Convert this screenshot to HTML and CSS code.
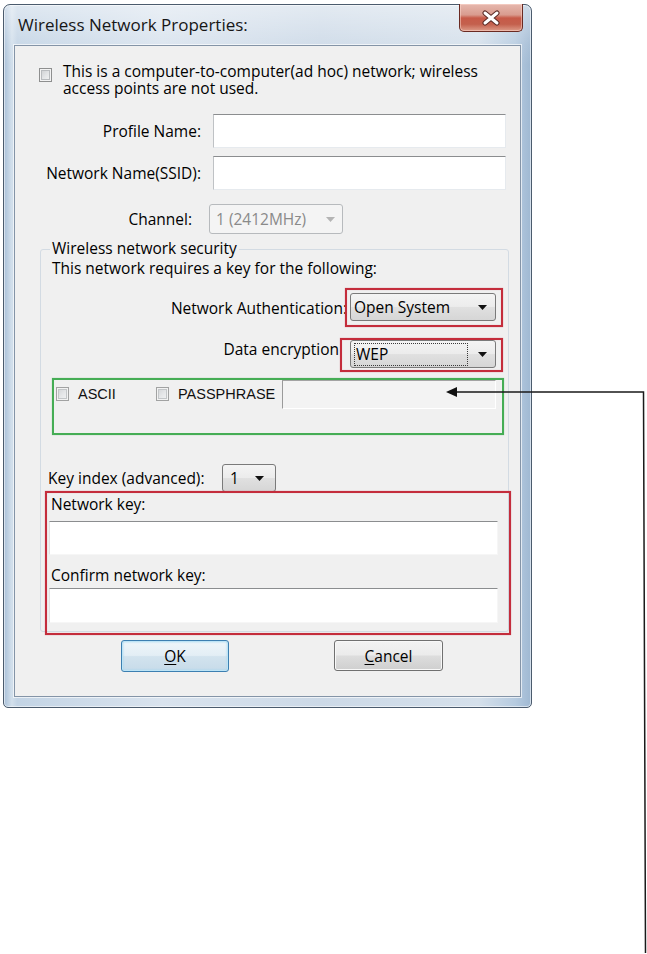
FILE: index.html
```html
<!DOCTYPE html>
<html lang="en">
<head>
<meta charset="utf-8">
<title>Wireless Network Properties</title>
<link rel="stylesheet" href="styles.css">
</head>
<body>
<div class="window">
  <div class="titlebar">
    <span class="title">Wireless Network Properties:</span>
    <span class="close" role="button" aria-label="Close">
      <svg class="close-x" width="20" height="16" viewBox="0 0 20 16">
        <path d="M4 3 L16 13 M16 3 L4 13" stroke="#5a2a24" stroke-width="5" stroke-linecap="round" fill="none"/>
        <path d="M4 3 L16 13 M16 3 L4 13" stroke="#ffffff" stroke-width="3" stroke-linecap="round" fill="none"/>
      </svg>
    </span>
  </div>
  <div class="panel">
    <div class="adhoc">
      <span class="cb"></span>
      <span class="adhoc-text">This is a computer-to-computer(ad hoc) network; wireless<br>access points are not used.</span>
    </div>
    <div class="row row-profile">
      <span class="lbl lbl-wide">Profile Name:</span>
      <span class="edit edit-wide"></span>
    </div>
    <div class="row row-ssid">
      <span class="lbl lbl-wide">Network Name(SSID):</span>
      <span class="edit edit-wide"></span>
    </div>
    <div class="row row-channel">
      <span class="lbl lbl-channel">Channel:</span>
      <span class="combo combo-disabled combo-channel">
        <span class="combo-text">1 (2412MHz)</span>
        <svg class="arrow" width="9" height="5" viewBox="0 0 9 5"><path d="M0 0 H9 L4.5 5 Z" fill="#b4b4b4"/></svg>
      </span>
    </div>
    <div class="group">
      <span class="legend">Wireless network security</span>
      <div class="group-intro">This network requires a key for the following:</div>
      <div class="pick pick-auth">
        <span class="pick-lbl pick-lbl-auth">Network Authentication:</span>
        <span class="hl hl-auth">
          <span class="combo combo-wide">
            <span class="combo-text">Open System</span>
            <svg class="arrow" width="9" height="5" viewBox="0 0 9 5"><path d="M0 0 H9 L4.5 5 Z" fill="#111"/></svg>
          </span>
        </span>
      </div>
      <div class="pick pick-enc">
        <span class="pick-lbl pick-lbl-enc">Data encryption</span>
        <span class="hl hl-enc">
          <span class="combo combo-wide combo-focus">
            <span class="focus">WEP</span>
            <svg class="arrow" width="9" height="5" viewBox="0 0 9 5"><path d="M0 0 H9 L4.5 5 Z" fill="#111"/></svg>
          </span>
        </span>
      </div>
      <div class="green">
        <span class="opt opt-ascii"><span class="cb cb-small"></span><span class="opt-text">ASCII</span></span>
        <span class="opt opt-pass"><span class="cb cb-small"></span><span class="opt-text">PASSPHRASE</span></span>
        <span class="keyfield"></span>
      </div>
      <div class="row row-keyindex">
        <span class="lbl lbl-keyindex">Key index (advanced):</span>
        <span class="combo combo-key">
          <span class="combo-text">1</span>
          <svg class="arrow" width="9" height="5" viewBox="0 0 9 5"><path d="M0 0 H9 L4.5 5 Z" fill="#111"/></svg>
        </span>
      </div>
      <div class="hl keys">
        <div class="nk-lbl">Network key:</div>
        <span class="edit nk-edit"></span>
        <div class="nk-lbl nk-lbl2">Confirm network key:</div>
        <span class="edit nk-edit nk-edit2"></span>
      </div>
    </div>
    <div class="buttons">
      <span class="btn btn-default"><u>O</u>K</span>
      <span class="btn btn-cancel"><u>C</u>ancel</span>
    </div>
  </div>
</div>
<svg class="callout" width="647" height="954" viewBox="0 0 647 954">
  <path d="M455 392 H643.5 L645.5 953" stroke="#1a1a1a" stroke-width="1.5" fill="none"/>
  <path d="M446 392 L457 387 L457 397 Z" fill="#111"/>
</svg>
</body>
</html>
```

FILE: styles.css
```css
html, body {
  margin: 0;
}

body {
  position: relative;
  box-sizing: border-box;
  width: 647px;
  height: 954px;
  padding: 4px 0 0 3px;
  background: #ffffff;
  font-family: "Open Sans", "Noto Sans", sans-serif;
  font-size: 15.5px;
  color: #000;
  overflow: hidden;
}

.window {
  box-sizing: border-box;
  width: 529px;
  height: 704px;
  border: 1px solid #4b5b6d;
  border-radius: 7px 7px 5px 5px;
  padding: 0 10px 10px;
  display: flex;
  flex-direction: column;
  background:
    linear-gradient(180deg, rgba(255,255,255,0.45) 0, rgba(255,255,255,0.1) 40px, rgba(255,255,255,0) 60px),
    linear-gradient(90deg, #a9c0d8 0, #d3e0ec 1.5%, #c3d4e5 2.5%, #d9e3ee 30%, #ccd9e7 60%, #d5e0eb 90%, #b6cbe0 97%, #9fb8d2 100%);
  box-shadow: inset 0 0 0 1px rgba(255,255,255,0.55);
}

.titlebar {
  height: 40px;
  display: flex;
  align-items: center;
  padding-left: 4px;
}

.title {
  font-size: 17px;
  line-height: 20px;
  color: #161616;
}

.close {
  margin-left: auto;
  align-self: flex-start;
  margin-top: -1px;
  margin-right: -2px;
  box-sizing: border-box;
  width: 64px;
  height: 28px;
  border: 1px solid #6a2a22;
  border-top: none;
  border-radius: 0 0 5px 5px;
  display: flex;
  align-items: center;
  justify-content: center;
  background: linear-gradient(180deg, #e6b8ae 0%, #d99c8f 40%, #c75a48 52%, #c4604d 75%, #dd9b88 100%);
  box-shadow: inset 0 0 0 1px rgba(255,220,210,0.5);
}

.close-x {
  display: block;
}

.panel {
  box-sizing: border-box;
  height: 652px;
  border: 1px solid #8494a7;
  background: #f0f0f0;
  box-shadow: 0 0 0 1px rgba(255,255,255,0.65);
}

/* checkbox */
.cb {
  display: block;
  flex: none;
  box-sizing: border-box;
  width: 13px;
  height: 14px;
  border: 1px solid #8e8f8f;
  background: linear-gradient(135deg, #c9cbcd 0%, #e4e6e8 55%, #f6f6f6 100%);
  box-shadow: inset 0 0 0 1px #f3f3f3, inset 0 0 0 2px #b9bcbf;
}

.adhoc {
  display: flex;
  align-items: flex-start;
  padding: 17px 0 0 24px;
  line-height: 17px;
}

.adhoc .cb {
  margin: 5px 11px 0 0;
}

.row {
  display: flex;
  align-items: center;
}

.lbl {
  line-height: 17px;
}

.lbl-wide {
  width: 186px;
  margin-right: 12px;
  text-align: right;
}

.edit {
  display: block;
  box-sizing: border-box;
  background: #ffffff;
  border: 1px solid;
  border-color: #8b8d8f #e6eaee #e6eaee #bfc2c5;
}

.edit-wide {
  width: 293px;
  height: 34px;
}

.row-profile {
  margin-top: 17px;
}

.row-ssid {
  margin-top: 8px;
}

.row-channel {
  margin-top: 14px;
}

.lbl-channel {
  width: 177px;
  margin-right: 17px;
  text-align: right;
}

/* combo boxes */
.combo {
  box-sizing: border-box;
  display: flex;
  align-items: center;
  border: 1px solid #7a7a7a;
  border-radius: 3px;
  padding: 0 8px 0 3px;
  background: linear-gradient(180deg, #f4f4f4 0%, #ececec 48%, #e0e0e0 52%, #d6d6d6 100%);
  line-height: 17px;
}

.combo .arrow {
  margin-left: auto;
  display: block;
  flex: none;
}

.combo-disabled {
  border-color: #b7babd;
  background: #f4f4f4;
  color: #8a8a8a;
  padding-left: 6px;
  padding-right: 7px;
}

.combo-channel {
  width: 134px;
  height: 30px;
}

.group {
  box-sizing: border-box;
  margin: 15px 0 0 25px;
  width: 469px;
  border: 1px solid #d3dbe3;
  border-radius: 3px;
  line-height: 16px;
}

.legend {
  display: block;
  width: fit-content;
  margin: -10px 0 0 9px;
  padding: 0 2px;
  background: #f0f0f0;
}

.group-intro {
  margin: 4px 0 0 11px;
}

.pick {
  display: flex;
  justify-content: flex-end;
  margin-right: 5px;
}

.pick-auth {
  margin-top: 12px;
  align-items: center;
}

.pick-lbl-auth {
  margin-right: -2px;
}

.pick-enc {
  margin-top: 11px;
  align-items: flex-start;
}

.pick-lbl-enc {
  margin-top: 3px;
  margin-right: 1px;
}

.hl {
  box-sizing: border-box;
  border: 2px solid #c42d3c;
  box-shadow: 0 0 1px rgba(196,45,60,0.5), inset 0 0 1px rgba(196,45,60,0.4);
}

.hl-auth {
  padding: 3px 5px 4px 3px;
  position: relative;
}

.hl-enc {
  padding: 0 5px 2px 8px;
}

.combo-wide {
  width: 146px;
  height: 28px;
}

.combo-focus {
  padding-left: 3px;
}

.focus {
  box-sizing: border-box;
  width: 114px;
  height: 23px;
  border: 1px dotted #3a3a3a;
  padding-left: 1px;
  line-height: 21px;
}

/* green annotation box */
.green {
  box-sizing: border-box;
  margin: 6px 0 0 11px;
  width: 452px;
  height: 57px;
  border: 2px solid #45ad55;
  box-shadow: 0 0 1px rgba(69,173,85,0.5);
  display: flex;
  align-items: flex-start;
  padding-left: 2px;
}

.opt {
  display: flex;
  align-items: flex-start;
  flex: none;
}

.opt .cb {
  margin-top: 7px;
  margin-right: 9px;
  opacity: 0.8;
}

.opt-text {
  margin-top: 6px;
  font-family: "Liberation Sans", Arial, sans-serif;
  font-size: 14.5px;
  line-height: 16px;
  color: #111;
}

.opt-ascii {
  width: 100px;
}

.opt-pass {
  width: 126px;
}

.keyfield {
  display: block;
  box-sizing: border-box;
  width: 214px;
  height: 29px;
  background: #f3f3f3;
  border: 1px solid;
  border-color: #a3a3a3 #ffffff #ffffff #9a9a9a;
}

.row-keyindex {
  margin: 29px 0 0 7px;
}

.lbl-keyindex {
  width: 174px;
}

.combo-key {
  width: 54px;
  height: 28px;
  padding: 0 11px 0 7px;
}

.keys {
  margin: -1px 0 -4px 4px;
  width: 466px;
  height: 144px;
  position: relative;
}

.nk-lbl {
  margin: 3px 0 0 4px;
}

.nk-lbl2 {
  margin-top: 12px;
}

.nk-edit {
  margin: 9px 0 0 2px;
  width: 449px;
  height: 34px;
  border-color: #8b8d8f #f6f6f6 #f6f6f6 #e2e2e2;
}

.nk-edit2 {
  margin-top: 5px;
  height: 35px;
}

.buttons {
  display: flex;
  margin-top: 8px;
  padding-left: 106px;
}

.btn {
  box-sizing: border-box;
  display: flex;
  align-items: center;
  justify-content: center;
  border-radius: 3px;
  font-size: 15.5px;
}

.btn u {
  text-decoration-thickness: 1px;
  text-underline-offset: 2px;
}

.btn-default {
  width: 108px;
  height: 32px;
  border: 1px solid #3c7fb1;
  background: linear-gradient(180deg, #eef6fa 0%, #e3eef5 48%, #d2e3ee 52%, #c7dbe9 100%);
  box-shadow: inset 0 0 0 1px #bde4f6, inset 0 0 2px 1px #9fd5ef;
}

.btn-cancel {
  margin-left: 105px;
  width: 109px;
  height: 31px;
  border: 1px solid #707070;
  background: linear-gradient(180deg, #f2f2f2 0%, #ebebeb 48%, #dddddd 52%, #cfcfcf 100%);
  box-shadow: inset 0 0 0 1px #f8f8f8;
}

.callout {
  position: absolute;
  left: 0;
  top: 0;
  pointer-events: none;
}
```
